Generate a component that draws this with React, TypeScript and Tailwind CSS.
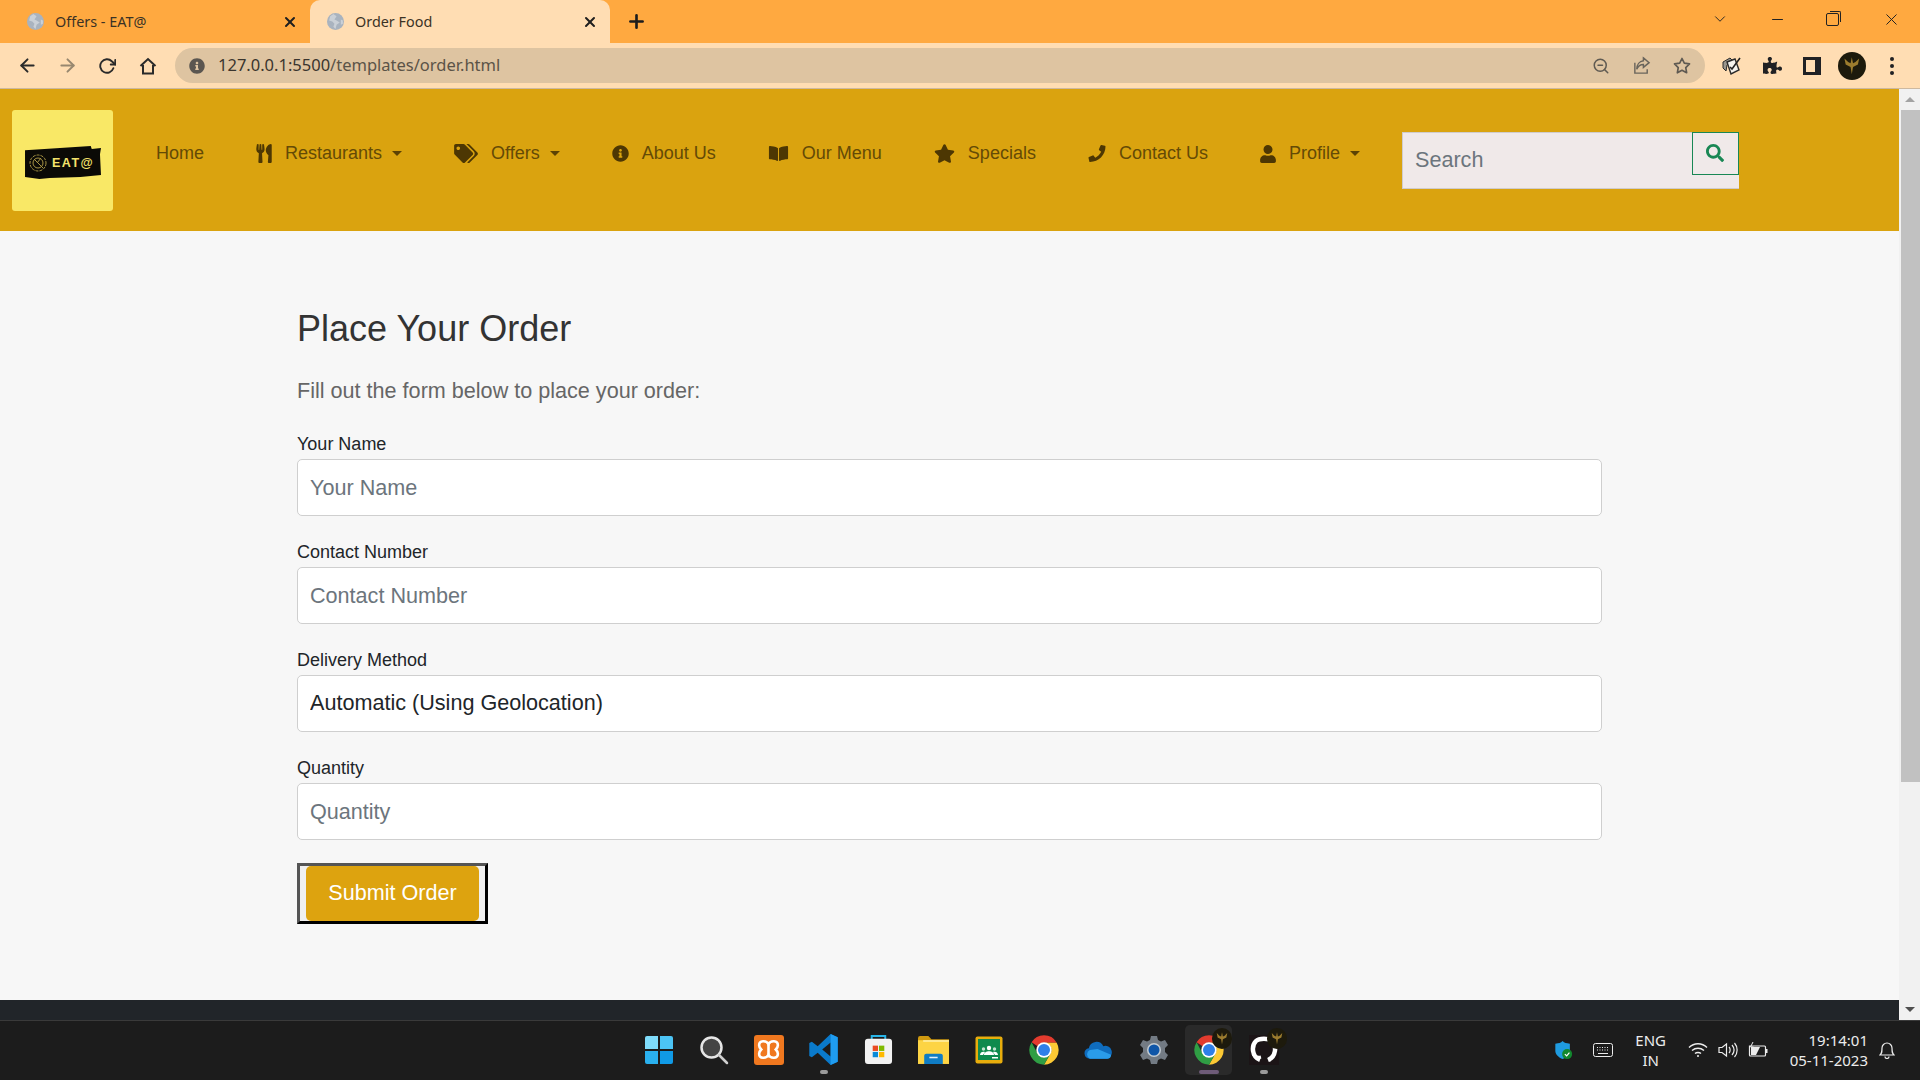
import React from 'react';
import {
  FaUtensils,
  FaTags,
  FaInfoCircle,
  FaBookOpen,
  FaStar,
  FaPhone,
  FaUser,
  FaSearch,
  FaPuzzlePiece,
} from 'react-icons/fa';
import { FiChevronDown, FiX, FiPlus, FiArrowLeft, FiArrowRight, FiRotateCw, FiMinus, FiStar, FiZoomOut } from 'react-icons/fi';

const Globe = () => (
  <svg viewBox="0 0 16 16" className="w-[17px] h-[17px] shrink-0">
    <circle cx="8" cy="8" r="8" fill="#a9b3bf" />
    <path d="M6 1 3 3 2 7l3 1 2 2-1 3 2 2 1-4 3-2-3-2-2-1 2-3zM13 6l2 1v3l-2 1z" fill="#dbe0e3" opacity="0.65" />
  </svg>
);

const Caret = () => <span className="ml-[10px] w-0 h-0 border-x-[5px] border-x-transparent border-t-[5px] border-t-[#5c4204]" />;

const Tab = ({ title, active }: { title: string; active?: boolean }) => (
  <div className={`w-[300px] h-[43px] flex items-center pl-[17px] pr-[12px] gap-[11px] ${active ? 'bg-[#ffddb3] rounded-t-[10px]' : ''}`}>
    <Globe />
    <span className="flex-1 text-[14.4px] text-[#3b3225] font-['Noto_Sans',sans-serif]">{title}</span>
    <FiX className="w-[16px] h-[16px] text-[#1f1f1f]" strokeWidth={3} />
  </div>
);

const NavItem = ({ icon, label, caret }: { icon?: React.ReactNode; label: string; caret?: boolean }) => (
  <a className="flex items-center px-[26px] text-[18px] text-[#644a06]">
    {icon && <span className="mr-[13px] text-[#4d3703] flex items-center">{icon}</span>}
    <span>{label}</span>
    {caret && <Caret />}
  </a>
);

const Field = ({ label, children }: { label: string; children: React.ReactNode }) => (
  <div className="mb-[23px]">
    <label className="block h-[27px] leading-[27px] text-[18px] text-[#212529] mb-[1px]">{label}</label>
    {children}
  </div>
);

const inputClass =
  'block w-full h-[57px] px-[12px] bg-white border border-[#cfcfcf] rounded-[5px] text-[21.6px] text-[#212529] placeholder:text-[#6c757d] outline-none';

const ChromeIcon = () => (
  <svg viewBox="0 0 48 48" className="w-[32px] h-[32px]">
    <path d="M24 2a22 22 0 0 1 19.05 11H24a11 11 0 0 0-9.53 5.5L5.4 12.4A22 22 0 0 1 24 2z" fill="#e33b2e" />
    <path d="M24 13H43.05A22 22 0 0 1 24 46L33.53 29.5A11 11 0 0 0 24 13z" fill="#fcc934" />
    <path d="M5.4 12.4L14.47 29.5A11 11 0 0 0 33.53 29.5L24 46A22 22 0 0 1 5.4 12.4z" fill="#2f9e44" />
    <circle cx="24" cy="24" r="11.500" fill="#fff" />
    <circle cx="24" cy="24" r="9" fill="#2f7fe8" />
  </svg>
);

const Phoenix = ({ size }: { size: string }) => (
  <span className={`${size} rounded-full bg-[#1d1a0c] flex items-center justify-center`}>
    <svg viewBox="0 0 16 16" className="w-[70%] h-[70%]">
      <path d="M8 15 7 9 3 7 2 2l3 3 2 1 1-5 1 5 2-1 3-3-1 5-4 2z" fill="#9c7c2e" />
    </svg>
  </span>
);

const TaskIcon = ({ children, pill, active }: { children: React.ReactNode; pill?: boolean; active?: boolean }) => (
  <div className={`relative w-[47px] h-[50px] mx-[4px] flex items-center justify-center rounded-[5px] ${active ? 'bg-[#2a2a2a]' : ''}`}>
    {children}
    {pill && <span className={`absolute bottom-[1px] h-[4px] rounded-full ${active ? 'w-[20px] bg-[#6e5b78]' : 'w-[8px] bg-[#9a9a9a]'}`} />}
  </div>
);

const ToolSlot = ({ children }: { children: React.ReactNode }) => (
  <span className="w-[40px] flex items-center justify-center">{children}</span>
);

export default function App() {
  return (
    <div className="w-[1920px] h-[1080px] overflow-hidden flex flex-col font-['Liberation_Sans',Arial,sans-serif]">
      {/* browser tabs */}
      <div className="h-[43px] bg-[#ffa940] flex items-center pl-[10px] shrink-0">
        <Tab title="Offers - EAT@" />
        <Tab title="Order Food" active />
        <FiPlus className="ml-[16px] w-[21px] h-[21px] text-[#1c1c1c]" strokeWidth={3} />
        <div className="ml-auto flex items-center pr-[7px] pb-[5px] text-[#222]">
          <FiChevronDown className="w-[18px] h-[18px] mr-[40px]" strokeWidth={1.25} />
          <FiMinus className="w-[17px] h-[17px] mr-[40px]" strokeWidth={1.5} />
          <span className="relative w-[13px] h-[13px] border border-[#222] rounded-[2px] mr-[43px]">
            <span className="absolute -top-[3px] -right-[3px] w-[11px] h-[11px] border-t border-r border-[#222] rounded-tr-[2px]" />
          </span>
          <FiX className="w-[19px] h-[19px] mr-[12px]" strokeWidth={1.25} />
        </div>
      </div>

      {/* toolbar */}
      <div className="h-[46px] bg-[#ffddb3] border-b border-[#cdb9a0] flex items-center shrink-0 pl-[17px]">
        <FiArrowLeft className="w-[21px] h-[21px] text-[#2a2a2a] mr-[19px]" strokeWidth={2.25} />
        <FiArrowRight className="w-[21px] h-[21px] text-[#97876f] mr-[20px]" strokeWidth={2.25} />
        <FiRotateCw className="w-[18px] h-[18px] text-[#2a2a2a] mr-[22px]" strokeWidth={2.5} />
        <svg viewBox="0 0 20 20" className="w-[20px] h-[20px] mr-[17px]" fill="none" stroke="#2a2a2a" strokeWidth="2">
          <path d="M2.5 10 10 3l7.5 7M5 9v8.500h10V9" />
        </svg>
        <div className="w-[1530px] h-[35px] rounded-full bg-[#dec4a1] flex items-center pl-[14px] pr-[14px]">
          <FaInfoCircle className="w-[16px] h-[16px] text-[#5b5650]" />
          <span className="ml-[13px] flex-1 text-[16.500px] text-[#3a352e] font-['Noto_Sans',sans-serif]">
            127.0.0.1:5500<span className="text-[#5b5347]">/templates/order.html</span>
          </span>
          <FiZoomOut className="w-[18px] h-[18px] text-[#5f5a52] mr-[22px]" strokeWidth={2} />
          <svg viewBox="0 0 20 20" className="w-[19px] h-[19px] mr-[22px]" fill="none" stroke="#6a655c" strokeWidth="1.500">
            <path d="M3 7v11h13v-4" />
            <path d="M12 2l6 5-6 5V9C9 9 6.500 10.500 5 14c0-5 3-8.500 7-9z" />
          </svg>
          <FiStar className="w-[18px] h-[18px] text-[#5f5a52]" strokeWidth={2.25} />
        </div>
        <div className="flex items-center pl-[7px]">
          <ToolSlot>
            <svg viewBox="0 0 22 20" className="w-[22px] h-[20px]">
              <path d="M2 6 9 2l2 2-5 5-1 6-3-3z" fill="#9a968e" stroke="#2b2b2b" />
              <path d="M6 6l8-3 4 11-8 4z" fill="#f5f3ee" stroke="#2b2b2b" strokeWidth="1.400" />
              <path d="M9 11l2 2 8-11" fill="none" stroke="#222" strokeWidth="1.600" />
            </svg>
          </ToolSlot>
          <ToolSlot>
            <FaPuzzlePiece className="w-[19px] h-[19px] text-[#202124]" />
          </ToolSlot>
          <ToolSlot>
            <span className="w-[18px] h-[18px] bg-[#202124] flex items-center pl-[3px]">
              <span className="w-[9px] h-[12px] bg-[#ffddb3]" />
            </span>
          </ToolSlot>
          <ToolSlot>
            <Phoenix size="w-[28px] h-[28px]" />
          </ToolSlot>
          <ToolSlot>
            <span className="flex flex-col gap-[3px]">
              <span className="w-[4px] h-[4px] rounded-full bg-[#202124]" />
              <span className="w-[4px] h-[4px] rounded-full bg-[#202124]" />
              <span className="w-[4px] h-[4px] rounded-full bg-[#202124]" />
            </span>
          </ToolSlot>
        </div>
      </div>

      {/* viewport */}
      <div className="flex-1 min-h-0 flex">
        <div className="flex-1 min-w-0 flex flex-col bg-[#f7f7f7]">
          <nav className="h-[142px] bg-[#daa30f] flex items-center pl-[12px] shrink-0">
            <div className="relative w-[101px] h-[101px] rounded-[3px] bg-[#f9e866] mr-[17px] shrink-0">
              <svg viewBox="0 0 75 32" preserveAspectRatio="none" className="absolute left-[12px] top-[36px] w-[77px] h-[33px]">
                <path d="M1 4 20 3 65 0l1 3 9-1-1 6 1 20-20 2-30 1-10 1-14-2L1 20z" fill="#0b0a06" />
              </svg>
              <div className="absolute left-[17px] top-[43px] flex items-center">
                <svg viewBox="0 0 18 18" className="w-[18px] h-[18px] mr-[5px]" fill="none" stroke="#a89545" strokeWidth="1">
                  <circle cx="9" cy="9" r="8" strokeDasharray="3 1" />
                  <circle cx="9" cy="9" r="5" />
                  <path d="M5 5l9 9M12 4 8 9" />
                </svg>
                <span className="text-[12.500px] leading-[20px] font-bold tracking-[1.5px] text-[#f4e36b]">EAT@</span>
              </div>
            </div>
            <div className="flex items-center pb-[13px]">
              <NavItem label="Home" />
              <NavItem icon={<FaUtensils className="w-[16px] h-[19px]" />} label="Restaurants" caret />
              <NavItem icon={<FaTags className="w-[24px] h-[19px]" />} label="Offers" caret />
              <NavItem icon={<FaInfoCircle className="w-[17px] h-[17px]" />} label="About Us" />
              <NavItem icon={<FaBookOpen className="w-[21px] h-[17px]" />} label="Our Menu" />
              <NavItem icon={<FaStar className="w-[21px] h-[19px]" />} label="Specials" />
              <NavItem icon={<FaPhone className="w-[18px] h-[17px]" />} label="Contact Us" />
              <NavItem icon={<FaUser className="w-[16px] h-[18px]" />} label="Profile" caret />
            </div>
            <form className="relative w-[337px] h-[57px] ml-[16px] bg-[#f0e9e9] border-b border-[#d0cccc]">
              <input
                placeholder="Search"
                className="w-[290px] h-[56px] pl-[12px] bg-transparent border-t border-l border-[#d0cccc] text-[21.6px] text-[#212529] placeholder:text-[#6c757d] outline-none"
              />
              <button type="button" className="absolute right-0 top-0 w-[47px] h-[43px] border border-[#198754] flex items-center justify-center">
                <FaSearch className="w-[18px] h-[18px] text-[#198754]" />
              </button>
            </form>
          </nav>

          <main className="flex-1 min-h-0 pl-[297px] pt-[75px]">
            <div className="w-[1305px]">
              <h1 className="h-[46px] leading-[46px] text-[36px] text-[#333333] mb-[24px]">Place Your Order</h1>
              <p className="h-[30px] leading-[30px] text-[21.6px] text-[#666666] mb-[25px]">Fill out the form below to place your order:</p>
              <Field label="Your Name">
                <input className={inputClass} placeholder="Your Name" />
              </Field>
              <Field label="Contact Number">
                <input className={inputClass} placeholder="Contact Number" />
              </Field>
              <Field label="Delivery Method">
                <select className={`${inputClass} appearance-none`} defaultValue="auto">
                  <option value="auto">Automatic (Using Geolocation)</option>
                </select>
              </Field>
              <Field label="Quantity">
                <input className={inputClass} placeholder="Quantity" />
              </Field>
              <div className="w-[191px] h-[61px] border-[3px] border-t-[#555555] border-l-[#555555] border-r-black border-b-black bg-[#f0f0f0] flex items-center justify-center">
                <button type="button" className="w-[173px] h-[55px] rounded-[5px] bg-[#dda30f] text-white text-[21.6px]">Submit Order</button>
              </div>
            </div>
          </main>

          <footer className="h-[20px] bg-[#212529] shrink-0" />
        </div>

        {/* scrollbar */}
        <div className="w-[21px] bg-[#f1f1f1] flex flex-col items-end shrink-0">
          <div className="w-full h-[21px] flex items-center justify-center">
            <span className="w-0 h-0 border-x-[5px] border-x-transparent border-b-[5px] border-b-[#a3a3a3]" />
          </div>
          <div className="w-[19px] h-[672px] bg-[#c1c1c1]" />
          <div className="flex-1" />
          <div className="w-full h-[21px] flex items-center justify-center">
            <span className="w-0 h-0 border-x-[5px] border-x-transparent border-t-[5px] border-t-[#505050]" />
          </div>
        </div>
      </div>

      {/* taskbar */}
      <div className="h-[60px] bg-[#1c1c1c] border-t border-[#3a3a3a] grid grid-cols-[1fr_auto_1fr] items-center shrink-0 pb-[2px]">
        <div />
        <div className="flex items-center pl-[2px]">
          <TaskIcon>
            <svg viewBox="0 0 30 30" className="w-[30px] h-[30px]">
              <path d="M1 3a2 2 0 0 1 2-2h11v13H1z" fill="#7fdcfb" />
              <path d="M16 1h11a2 2 0 0 1 2 2v11H16z" fill="#4cc4f5" />
              <path d="M1 16h13v13H3a2 2 0 0 1-2-2z" fill="#2ab0ee" />
              <path d="M16 16h13v11a2 2 0 0 1-2 2H16z" fill="#109ae6" />
            </svg>
          </TaskIcon>
          <TaskIcon>
            <svg viewBox="0 0 30 30" className="w-[30px] h-[30px]" fill="none">
              <circle cx="12.500" cy="12.500" r="10" fill="#444" stroke="#e6e6e6" strokeWidth="2.500" />
              <path d="M20 20l8 8" stroke="#cfcfcf" strokeWidth="2.500" strokeLinecap="round" />
            </svg>
          </TaskIcon>
          <TaskIcon>
            <span className="w-[30px] h-[30px] rounded-[3px] bg-[#f0781f] flex items-center justify-center">
              <svg viewBox="0 0 24 24" className="w-[25px] h-[25px]" fill="none" stroke="#fff" strokeWidth="2.500">
                <path d="M12 7C10 3 3 3 3 8c0 2 1 3 2 4-1 1-2 2-2 4 0 5 7 5 9 1 2 4 9 4 9-1 0-2-1-3-2-4 1-1 2-2 2-4 0-5-7-5-9-1z" />
                <path d="M12 7v10" />
              </svg>
            </span>
          </TaskIcon>
          <TaskIcon pill>
            <svg viewBox="0 0 24 24" className="w-[31px] h-[31px]">
              <path d="M17.500 0 7.500 9.500 3 6 1 7v10l2 1 4.500-3.500L17.500 24 23 21.500v-19zM17.500 6.500 11 12l6.500 5.500z" fill="#0a7acb" fillRule="evenodd" />
              <path d="M17.500 0 23 2.500v19L17.500 24z" fill="#1f9cf0" />
            </svg>
          </TaskIcon>
          <TaskIcon>
            <svg viewBox="0 0 30 32" className="w-[29px] h-[31px]">
              <path d="M8 6V2h14v4" fill="none" stroke="#28b5e8" strokeWidth="2" />
              <rect x="1" y="5" width="28" height="26" rx="3" fill="#f2f2f2" />
              <rect x="9" y="12" width="5.500" height="5.500" fill="#ea4b23" />
              <rect x="15.500" y="12" width="5.500" height="5.500" fill="#7fba00" />
              <rect x="9" y="18.500" width="5.500" height="5.500" fill="#0a8ad8" />
              <rect x="15.500" y="18.500" width="5.500" height="5.500" fill="#ffb900" />
            </svg>
          </TaskIcon>
          <TaskIcon>
            <svg viewBox="0 0 30 28" className="w-[31px] h-[29px]">
              <path d="M0 3a2 2 0 0 1 2-2h8l3 3h17v6H0z" fill="#d09a10" />
              <rect x="0" y="5" width="30" height="23" fill="#fdd444" />
              <rect x="5" y="5" width="25" height="1.500" fill="#fff0a8" />
              <path d="M6 20a2 2 0 0 1 2-2h14a2 2 0 0 1 2 2v8H6z" fill="#0f7cc4" />
              <rect x="11" y="21" width="8" height="1.500" fill="#dff0fb" />
            </svg>
          </TaskIcon>
          <TaskIcon>
            <svg viewBox="0 0 28 28" className="w-[28px] h-[28px]">
              <rect x="0.500" y="0.500" width="27" height="27" rx="2" fill="#e8ad0c" />
              <rect x="3" y="3" width="22" height="21" fill="#0f8a4e" />
              <circle cx="14" cy="12" r="2.200" fill="#fff" />
              <circle cx="8.500" cy="13" r="1.700" fill="#bfe3cf" />
              <circle cx="19.500" cy="13" r="1.700" fill="#bfe3cf" />
              <path d="M9 19c0-5 10-5 10 0zM5 19c0-3 3-4 5-3l-2 3zM23 19c0-3-3-4-5-3l2 3z" fill="#fff" />
              <rect x="17" y="21" width="6" height="1.500" fill="#fff" />
            </svg>
          </TaskIcon>
          <TaskIcon>
            <ChromeIcon />
          </TaskIcon>
          <TaskIcon>
            <svg viewBox="0 0 30 20" className="w-[29px] h-[20px]">
              <path d="M6 19a5.500 5.500 0 0 1-1-10.900A8 8 0 0 1 20 6a6 6 0 0 1 4 13z" fill="#0f6cbd" />
              <path d="M6 19a5 5 0 0 1 0-9l8-1 14 6a4 4 0 0 1-4 4z" fill="#2a9cea" />
            </svg>
          </TaskIcon>
          <TaskIcon>
            <svg viewBox="0 0 30 30" className="w-[30px] h-[30px]">
              <path
                d="M12 1h6l1 4 3 1.500 4-1.500 3 5-3 3v4l3 3-3 5-4-1.500-3 1.500-1 4h-6l-1-4-3-1.500-4 1.500-3-5 3-3v-4l-3-3 3-5 4 1.500 3-1.500z"
                fill="#737b84"
              />
              <circle cx="15" cy="15" r="7" fill="#c4ccd3" />
              <circle cx="15" cy="15" r="5.500" fill="#0f56a8" />
            </svg>
          </TaskIcon>
          <TaskIcon pill active>
            <ChromeIcon />
            <span className="absolute right-[0px] top-[3px]">
              <Phoenix size="w-[20px] h-[21px]" />
            </span>
          </TaskIcon>
          <TaskIcon pill>
            <span className="w-[30px] h-[30px] bg-[#1b1416] flex items-center justify-center">
              <svg viewBox="0 0 28 30" className="w-[28px] h-[30px]" fill="none" stroke="#fff" strokeWidth="4.500">
                <path d="M10 25C2 22 1 11 6 6c3-3 13-3 16 0 5 5 4 16-4 19" />
                <path d="M3 19c2 3 4 4 8 3" strokeWidth="3" />
              </svg>
            </span>
            <span className="absolute right-[0px] top-[3px]">
              <Phoenix size="w-[20px] h-[21px]" />
            </span>
          </TaskIcon>
        </div>

        {/* tray */}
        <div className="flex items-center justify-end pr-[25px] text-[#ececec] font-['Noto_Sans',sans-serif]">
          <svg viewBox="0 0 20 22" className="w-[19px] h-[20px] mr-[20px]">
            <path d="M9 1c2 2 4 2.500 8 3v8c0 4-4 7-8 9-4-2-8-5-8-9V4c4-.5 6-1 8-3z" fill="#1f9bdf" />
            <circle cx="14" cy="15.500" r="5.500" fill="#12882e" />
            <path d="M11.500 15.500l2 2 3-3.500" fill="none" stroke="#fff" strokeWidth="1.300" />
          </svg>
          <svg viewBox="0 0 20 14" className="w-[20px] h-[14px] mr-[19px]" fill="none" stroke="#ececec">
            <rect x="0.500" y="0.500" width="19" height="13" rx="2" />
            <path d="M4 4.500h12M4 7h12" strokeDasharray="1 1.500" />
            <path d="M5 10.500h10" />
          </svg>
          <div className="w-[38px] text-center text-[15px] leading-[20px] mr-[18px]">
            <div>ENG</div>
            <div>IN</div>
          </div>
          <svg viewBox="0 0 20 16" className="w-[20px] h-[16px] mr-[10px]" fill="none" stroke="#ececec" strokeWidth="1.400">
            <path d="M1 5.500c5-5 13-5 18 0M4 8.500c3.500-3 8.500-3 12 0M7 11.500c1.500-1.300 4.500-1.300 6 0" />
            <circle cx="10" cy="14" r="1" fill="#ececec" stroke="none" />
          </svg>
          <svg viewBox="0 0 20 16" className="w-[20px] h-[16px] mr-[10px]" fill="none" stroke="#ececec" strokeWidth="1.200">
            <path d="M1 5.500h3L8.500 2v12L4 10.500H1z" />
            <path d="M11 5c1.500 1.500 1.500 4.500 0 6M14 3c2.500 3 2.500 7 0 10M16.500 1c3.500 4 3.500 10 0 14" />
          </svg>
          <svg viewBox="0 0 20 16" className="w-[20px] h-[16px] mr-[22px]">
            <path d="M1.500 4h15a1 1 0 0 1 1 1v8a1 1 0 0 1-1 1h-14a1 1 0 0 1-1-1z" fill="none" stroke="#ececec" strokeWidth="1.200" />
            <path d="M3 5h9l-4 8H3z" fill="#ececec" />
            <rect x="18" y="7" width="1.500" height="4" fill="#ececec" />
            <path d="M5 0 2.500 5h3L3.500 9" fill="none" stroke="#ececec" />
          </svg>
          <div className="text-right text-[15px] leading-[20px] mr-[11px]">
            <div>19:14:01</div>
            <div>05-11-2023</div>
          </div>
          <svg viewBox="0 0 16 18" className="w-[16px] h-[18px]" fill="none" stroke="#ececec" strokeWidth="1.200">
            <path d="M1 14c2-2 2-3 2-7a5 5 0 0 1 10 0c0 4 0 5 2 7z" />
            <path d="M6 15.500a2 2 0 0 0 4 0" />
          </svg>
        </div>
      </div>
    </div>
  );
}
